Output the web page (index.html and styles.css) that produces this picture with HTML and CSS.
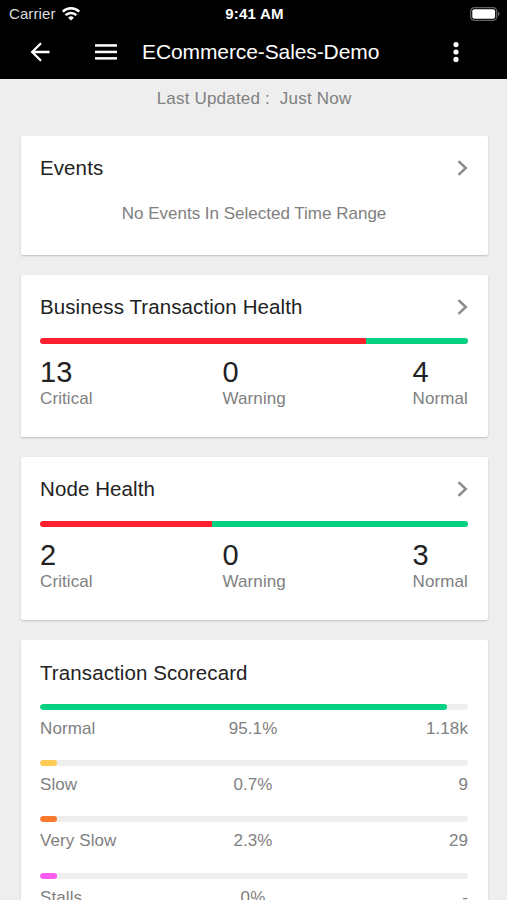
FILE: index.html
```html
<!DOCTYPE html>
<html lang="en">
<head>
    <meta charset="UTF-8">
    <meta name="viewport" content="width=device-width, initial-scale=1.0">
    <title>ECommerce-Sales-Demo</title>
    <link rel="stylesheet" href="styles.css">
</head>
<body>

<header>
    <div class="status-bar">
        <div class="carrier">
            <span>Carrier</span>
            <svg width="18" height="14" viewBox="0 0 18 14" fill="none" stroke="#fff" stroke-width="2.5">
                <path d="M0.8 4.7a11.6 11.6 0 0 1 16.4 0"/>
                <path d="M3.6 8.2a7.6 7.6 0 0 1 10.8 0"/>
                <path d="M9 13.6L6.1 10.7a4.1 4.1 0 0 1 5.8 0z" fill="#fff" stroke="none"/>
            </svg>
        </div>
        <span class="time">9:41 AM</span>
        <svg class="battery" width="30" height="14" viewBox="0 0 30 14">
            <rect x="0.7" y="0.7" width="26" height="12.6" rx="3.6" fill="none" stroke="#626262" stroke-width="1.3"/>
            <rect x="2.3" y="2.3" width="22.8" height="9.4" rx="2" fill="#fff"/>
            <path d="M28 4.6c2 .9 2 3.9 0 4.8z" fill="#626262"/>
        </svg>
    </div>
    <div class="app-bar">
        <svg class="back" width="20" height="20" viewBox="0 0 20 20" fill="none" stroke="#fff" stroke-width="2.3">
            <path d="M19.5 10H2M11 1.2L2.2 10l8.8 8.8"/>
        </svg>
        <svg class="menu" width="22" height="16" viewBox="0 0 22 16" fill="#fff">
            <rect y="0.2" width="22" height="2.5"/>
            <rect y="6.7" width="22" height="2.5"/>
            <rect y="13.1" width="22" height="2.5"/>
        </svg>
        <h1>ECommerce-Sales-Demo</h1>
        <svg class="more" width="6" height="20" viewBox="0 0 6 20" fill="#fff">
            <circle cx="3" cy="2.6" r="2.6"/>
            <circle cx="3" cy="10" r="2.6"/>
            <circle cx="3" cy="17.4" r="2.6"/>
        </svg>
    </div>
</header>

<main>
    <p class="updated">Last Updated :&nbsp; Just Now</p>

    <section class="card events">
        <div class="card-title">
            <h2>Events</h2>
            <svg width="11" height="16" viewBox="0 0 11 16" fill="none" stroke="#8c8c8c" stroke-width="2.5"><path d="M1.5 1.2L8.8 8l-7.3 6.8"/></svg>
        </div>
        <p class="empty">No Events In Selected Time Range</p>
    </section>

    <section class="card health">
        <div class="card-title">
            <h2>Business Transaction Health</h2>
            <svg width="11" height="16" viewBox="0 0 11 16" fill="none" stroke="#8c8c8c" stroke-width="2.5"><path d="M1.5 1.2L8.8 8l-7.3 6.8"/></svg>
        </div>
        <div class="bar">
            <div class="critical" style="width: 76.2%"></div>
            <div class="normal" style="width: 23.8%"></div>
        </div>
        <div class="counts">
            <div><strong>13</strong><span>Critical</span></div>
            <div><strong>0</strong><span>Warning</span></div>
            <div><strong>4</strong><span>Normal</span></div>
        </div>
    </section>

    <section class="card health">
        <div class="card-title">
            <h2>Node Health</h2>
            <svg width="11" height="16" viewBox="0 0 11 16" fill="none" stroke="#8c8c8c" stroke-width="2.5"><path d="M1.5 1.2L8.8 8l-7.3 6.8"/></svg>
        </div>
        <div class="bar">
            <div class="critical" style="width: 40.2%"></div>
            <div class="normal" style="width: 59.8%"></div>
        </div>
        <div class="counts">
            <div><strong>2</strong><span>Critical</span></div>
            <div><strong>0</strong><span>Warning</span></div>
            <div><strong>3</strong><span>Normal</span></div>
        </div>
    </section>

    <section class="card scorecard">
        <div class="card-title">
            <h2>Transaction Scorecard</h2>
        </div>
        <div class="score">
            <div class="bar"><div class="fill normal" style="width: 95.1%"></div></div>
            <div class="values"><span>Normal</span><span>95.1%</span><span>1.18k</span></div>
        </div>
        <div class="score">
            <div class="bar"><div class="fill slow" style="width: 4%"></div></div>
            <div class="values"><span>Slow</span><span>0.7%</span><span>9</span></div>
        </div>
        <div class="score">
            <div class="bar"><div class="fill very-slow" style="width: 4%"></div></div>
            <div class="values"><span>Very Slow</span><span>2.3%</span><span>29</span></div>
        </div>
        <div class="score">
            <div class="bar"><div class="fill stalls" style="width: 4%"></div></div>
            <div class="values"><span>Stalls</span><span>0%</span><span>-</span></div>
        </div>
    </section>
</main>

</body>
</html>
```
FILE: styles.css
```css
* {
    box-sizing: border-box;
}
body {
    margin: 0;
    height: 900px;
    overflow: hidden;
    font-family: "Liberation Sans", Arial, sans-serif;
    font-size: 17px;
    color: #808080;
    background-color: #eee;
}
h1, h2, p {
    margin: 0;
    font-weight: normal;
}
svg {
    display: block;
    flex: none;
}
header {
    height: 79px;
    background-color: #000;
    color: #fff;
}
.status-bar {
    display: grid;
    grid-template-columns: 1fr auto 1fr;
    align-items: center;
    height: 27px;
    padding: 0 7px 0 9px;
    font-size: 15px;
}
.carrier {
    display: flex;
    align-items: center;
    gap: 6px;
    color: #ddd;
    letter-spacing: 0.1px;
}
.time {
    font-weight: bold;
    letter-spacing: 0.2px;
}
.battery {
    justify-self: end;
}
.app-bar {
    display: flex;
    align-items: center;
    height: 50px;
    padding: 0 48px 0 30px;
}
.menu {
    margin-left: 45px;
}
h1 {
    flex: 1;
    margin-left: 25px;
    font-size: 21px;
    line-height: 26px;
    letter-spacing: -0.1px;
}
main {
    padding: 8px 19.5px 0 20.5px;
}
.updated {
    height: 48.5px;
    line-height: 23px;
    letter-spacing: 0.2px;
    text-align: center;
}
.card {
    margin-bottom: 20px;
    padding: 19px 19.5px 0;
    background-color: #fff;
    border-radius: 2px;
    box-shadow: 0 1px 2px rgba(0, 0, 0, 0.2);
}
.card-title {
    display: flex;
    justify-content: space-between;
    align-items: center;
    height: 26px;
    color: #222;
}
h2 {
    font-size: 20.5px;
    line-height: 26px;
    letter-spacing: 0.1px;
}
.events {
    height: 119px;
}
.empty {
    margin-top: 21px;
    line-height: 24px;
    text-align: center;
}
.health {
    height: 162.5px;
}
.bar {
    display: flex;
    height: 6px;
    border-radius: 3px;
    overflow: hidden;
    background-color: #eee;
}
.health .bar {
    margin-top: 18.5px;
}
.critical {
    background-color: #fe202e;
}
.normal {
    background-color: #04d182;
}
.slow {
    background-color: #fecb55;
}
.very-slow {
    background-color: #fc7a2e;
}
.stalls {
    background-color: #fc5cf0;
}
.fill {
    border-radius: 3px;
}
.counts {
    display: grid;
    grid-template-columns: 182.5px 1fr auto;
    margin-top: 11px;
    letter-spacing: 0.1px;
}
.counts strong {
    display: block;
    font-size: 29px;
    font-weight: normal;
    line-height: 34px;
    color: #222;
}
.counts span {
    display: block;
    line-height: 20px;
}
.scorecard {
    height: 300px;
    padding-top: 20px;
}
.scorecard .card-title {
    margin-bottom: 18.5px;
}
.score {
    height: 56.2px;
}
.values {
    display: grid;
    grid-template-columns: 1fr 1fr 1fr;
    margin-top: 7px;
    line-height: 24px;
    letter-spacing: 0.1px;
}
.values span:nth-child(2) {
    padding-right: 2px;
    text-align: center;
}
.values span:nth-child(3) {
    text-align: right;
}
```
